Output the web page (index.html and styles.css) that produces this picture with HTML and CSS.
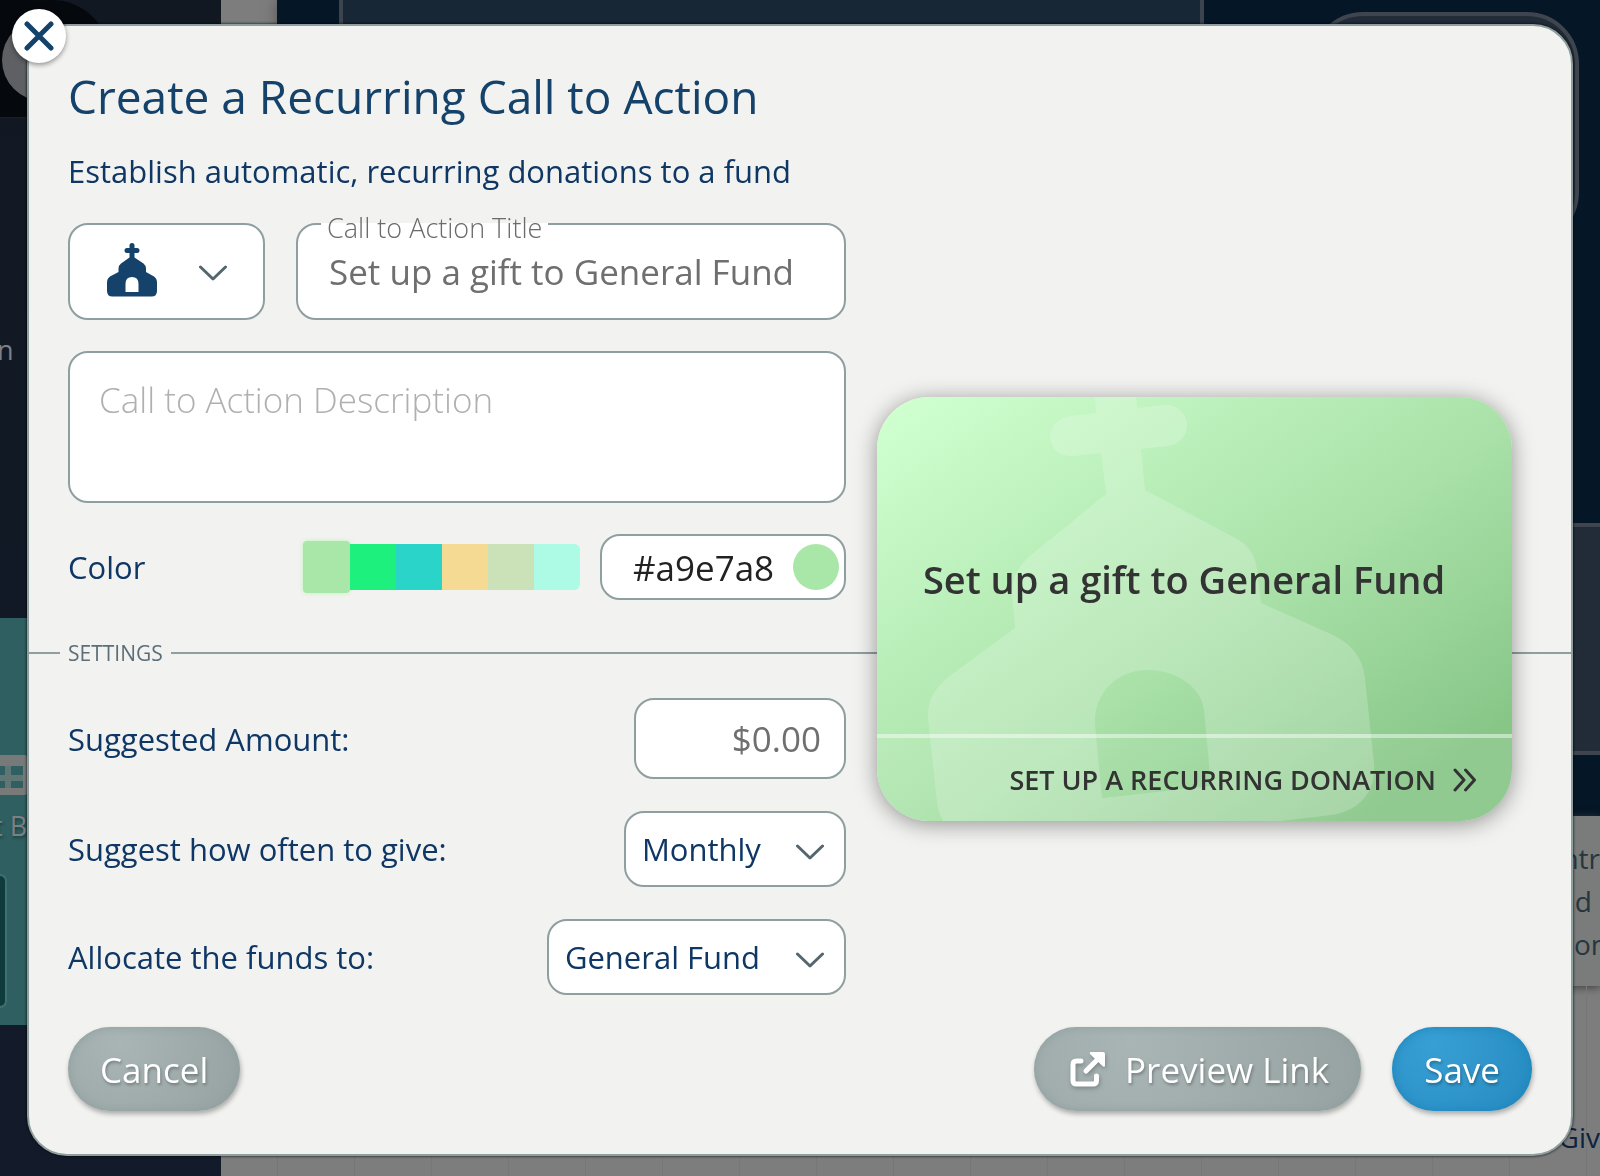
FILE: index.html
```html
<!DOCTYPE html>
<html lang="en">
<head>
    <meta charset="UTF-8">
    <meta name="viewport" content="width=device-width, initial-scale=1.0">
    <title>Create a Recurring Call to Action</title>
    <link rel="stylesheet" href="styles.css">
</head>
<body>
    <!-- Dimmed page behind the dialog -->
    <div class="page" aria-hidden="true">
        <div class="sidebar">
            <div class="profile"><div class="avatar"></div></div>
            <div class="org-name">n</div>
            <div class="nav-active">
                <svg class="nav-icon" viewBox="0 0 56 40">
                    <rect width="56" height="40" rx="4" fill="#777a79"/>
                    <path d="M6 11h45v22H6z" fill="#2f5f60"/>
                    <path d="M6 23h45M21 11v22M36 11v22" stroke="#5f7674" stroke-width="6"/>
                </svg>
                <div class="nav-label">t B</div>
                <div class="nav-box"></div>
            </div>
        </div>
        <div class="main">
            <div class="hero">
                <div class="hero-panel"></div>
                <div class="hero-side">
                    <div class="stat-box"></div>
                    <div class="stat-box wide"></div>
                </div>
            </div>
            <div class="note">
                <p>ntr</p>
                <p class="note-mid">nd</p>
                <p class="note-end">on</p>
            </div>
            <div class="chart">Giv</div>
        </div>
    </div>

    <div class="overlay">
        <form class="modal" role="dialog" aria-labelledby="modalTitle">
            <button type="button" class="close-button" aria-label="Close">
                <svg viewBox="0 0 30 30" width="30" height="30">
                    <path d="M3 3l24 24M27 3L3 27" stroke="#14426b" stroke-width="5" stroke-linecap="round"/>
                </svg>
            </button>

            <h1 id="modalTitle">Create a Recurring Call to Action</h1>
            <p class="subtitle">Establish automatic, recurring donations to a fund</p>

            <div class="modal-body">
                <!-- Appearance -->
                <div class="fields">
                    <div class="title-row">
                        <button type="button" class="icon-picker" aria-label="Choose icon">
                            <svg viewBox="0 0 50 58" width="50" height="58">
                                <path fill="#14426b" fill-rule="evenodd" d="M22.5 2.5a2.5 2.5 0 0 1 5 0V5H30a2.400 2.400 0 0 1 0 5h-2.500v4.500l9 6q2.500 2 2.500 5V29l8 4.500q3 2 3 6V48q0 5.500-5.500 5.500h-39Q0 53.500 0 48v-8.500q0-4 3-6l8.500-4.500v-3.500q0-3 2.500-5l8.500-6V10H20a2.400 2.400 0 0 1 0-5h2.500zM18.500 49h13v-8q0-7-6.500-7t-6.500 7z"/>
                            </svg>
                            <svg class="chevron" viewBox="0 -2 28 18" width="28" height="18"><path d="M1.500 2L14 14 26.500 2"/></svg>
                        </button>
                        <div class="title-field">
                            <label for="ctaTitle">Call to Action Title</label>
                            <input type="text" id="ctaTitle" placeholder="Set up a gift to General Fund">
                        </div>
                    </div>

                    <textarea class="description" aria-label="Call to Action Description" placeholder="Call to Action Description"></textarea>

                    <div class="row color-row">
                        <label for="colorHex">Color</label>
                        <div class="swatches">
                            <input type="radio" name="swatch" aria-label="#a9e7a8" style="background: #a9e7a8" checked>
                            <input type="radio" name="swatch" aria-label="#1ef07e" style="background: #1ef07e">
                            <input type="radio" name="swatch" aria-label="#2ad4c9" style="background: #2ad4c9">
                            <input type="radio" name="swatch" aria-label="#f4da92" style="background: #f4da92">
                            <input type="radio" name="swatch" aria-label="#cbe2b8" style="background: #cbe2b8">
                            <input type="radio" name="swatch" aria-label="#adfae5" style="background: #adfae5">
                        </div>
                        <div class="color-input">
                            <input type="text" id="colorHex" value="#a9e7a8">
                            <input type="color" class="color-dot" aria-label="Pick a color" value="#a9e7a8">
                        </div>
                    </div>
                </div>

                <h2 class="divider">SETTINGS</h2>

                <!-- Settings -->
                <div class="settings">
                    <div class="row">
                        <label for="amount">Suggested Amount:</label>
                        <input type="text" id="amount" class="amount" placeholder="$0.00">
                    </div>
                    <div class="row">
                        <label for="frequency">Suggest how often to give:</label>
                        <div class="select">
                            <select id="frequency">
                                <option>Monthly</option>
                            </select>
                            <svg class="chevron" viewBox="0 -2 28 18" width="28" height="18"><path d="M1.500 2L14 14 26.500 2"/></svg>
                        </div>
                    </div>
                    <div class="row">
                        <label for="fund">Allocate the funds to:</label>
                        <div class="select">
                            <select id="fund">
                                <option>General Fund</option>
                            </select>
                            <svg class="chevron" viewBox="0 -2 28 18" width="28" height="18"><path d="M1.500 2L14 14 26.500 2"/></svg>
                        </div>
                    </div>
                </div>

                <!-- Live card -->
                <div class="card">
                    <svg class="card-art" viewBox="0 0 635 424" preserveAspectRatio="xMidYMid slice">
                        <path fill="#fff" fill-opacity=".2" fill-rule="evenodd" d="M218 0L219 16L194 19C180 21 172 31 173 42C175 53 184 60 197 59L224 56L229 97L154 158C141 169 134 182 135 197L138 231L74 278C57 291 50 304 51 322L60 405Q61 415 66 424H404L454 418C482 414 499 395 497 367L488 282C486 262 476 248 456 238L384 206L380 172C378 158 371 148 360 142L268 93L264 52L291 49C303 47 311 38 310 26C308 14 299 7 287 8L260 11L259 0ZM225 401L218 328C216 297 240 273 270 273C300 273 324 290 327 313L334 389Z"/>
                    </svg>
                    <div class="card-title">Set up a gift to General Fund</div>
                    <div class="card-footer">
                        SET UP A RECURRING DONATION
                        <svg viewBox="0 0 24 24" width="24" height="24"><path d="M2 2l9 10-9 10M12.500 2l9 10-9 10" fill="none" stroke="#333" stroke-width="3" stroke-linecap="round" stroke-linejoin="round"/></svg>
                    </div>
                </div>
            </div>

            <div class="actions">
                <button type="button" class="button">Cancel</button>
                <button type="button" class="button preview-button">
                    <svg viewBox="0 0 36 36" width="36" height="36">
                        <path d="M11 10H6.500Q3 10 3 13.500V29.500Q3 33 6.500 33H23Q26.500 33 26.500 29.500V25" fill="none" stroke="#fff" stroke-width="5" stroke-linecap="round"/>
                        <path d="M16 20L28 8" stroke="#fff" stroke-width="5" stroke-linecap="round"/>
                        <path d="M21 1H33Q35 1 35 3V14.500Q35 16.500 33 15.500L20 3Q19 1 21 1z" fill="#fff"/>
                    </svg>
                    Preview Link
                </button>
                <button type="submit" class="button save-button">Save</button>
            </div>
        </form>
    </div>
</body>
</html>
```
FILE: styles.css
```css
* {
    margin: 0;
    padding: 0;
    box-sizing: border-box;
}

body {
    font-family: "Open Sans", sans-serif;
    font-size: 31px;
    color: #0f3765;
    background: #7d7d7d;
}

input,
textarea,
select,
button {
    font-family: inherit;
    color: inherit;
}

/* Page behind the dialog */
.page {
    position: fixed;
    inset: 0;
    display: grid;
    grid-template-columns: 221px 1fr;
    overflow: hidden;
    font-size: 27px;
    line-height: 43px;
}

.sidebar {
    background: linear-gradient(#111822, #131b2b);
    color: #7d7f83;
}

.profile {
    width: 110px;
    height: 118px;
    padding: 19px 2px;
    background: #05080d;
    border-radius: 0 58px 58px 0;
    border-bottom: 1px solid #1a1f27;
}

.avatar {
    width: 82px;
    height: 82px;
    border-radius: 50%;
    background: #5f6063;
}

.org-name {
    height: 500px;
    margin-left: -3px;
    padding-top: 210px;
}

.nav-active {
    height: 407px;
    padding-top: 137px;
    background: #2f5f60;
}

.nav-icon {
    display: block;
    width: 56px;
    height: 40px;
    margin-left: -28px;
}

.nav-label {
    margin: 9px 0 0 -7px;
    text-shadow: 1px 2px 3px #1d4040;
}

.nav-box {
    width: 7px;
    height: 134px;
    margin-top: 27px;
    background: #0f3b3c;
    border: 2px solid #3f7070;
    border-left: 0;
    border-radius: 0 20px 20px 0;
}

.main {
    min-width: 0;
    background: #7d7d7d;
}

.hero {
    display: flex;
    justify-content: space-between;
    height: 816px;
    margin-left: 56px;
    background: #051727;
    box-shadow: 0 0 12px #555;
}

.hero-panel {
    width: 865px;
    height: 600px;
    margin-left: 62px;
    background: #182735;
    border: 4px solid #3b444e;
    border-width: 0 4px;
    border-radius: 0 0 50px 50px;
}

.hero-side {
    width: 289px;
}

.stat-box {
    width: 268px;
    height: 232px;
    margin-top: 12px;
    background: #222c38;
    border: 4px solid #3e454e;
    border-radius: 52px;
}

.stat-box.wide {
    width: 100%;
    margin-top: 279px;
    border-width: 4px 0;
    border-radius: 0;
}

.note {
    height: 170px;
    padding-top: 21px;
    background: #7a7c7b;
    box-shadow: 0 2px 8px #444;
    color: #26363f;
    font-size: 28px;
    text-align: right;
}

.note-mid {
    padding-right: 8px;
}

.note-end {
    margin-right: -8px;
}

.chart {
    height: 300px;
    margin-left: 56px;
    padding-top: 131px;
    color: #0d2340;
    font-size: 28px;
    line-height: 40px;
    text-align: right;
    background: repeating-linear-gradient(to right, #777 0 1px, transparent 1px 77px);
}

/* Dialog */
.overlay {
    position: relative;
    min-height: 100vh;
    padding: 24px 27px 20px;
}

.modal {
    position: relative;
    padding: 40px 39px 43px;
    background: #f2f2f0;
    border: 2px solid #8f9e9f;
    border-radius: 40px;
    box-shadow: 0 0 3px #000;
}

.close-button {
    position: absolute;
    top: -17px;
    left: -17px;
    display: flex;
    align-items: center;
    justify-content: center;
    width: 54px;
    height: 54px;
    background: white;
    border: none;
    border-radius: 50%;
    box-shadow: 0 2px 5px rgba(0, 0, 0, 0.4);
    cursor: pointer;
}

h1 {
    margin-bottom: 25px;
    color: #14426b;
    font-size: 46px;
    font-weight: 400;
    line-height: 60px;
}

.subtitle {
    margin-bottom: 32px;
    line-height: 40px;
}

.modal-body {
    display: grid;
    grid-template-columns: 19fr 16fr;
    column-gap: 31px;
}

.fields {
    grid-area: 1 / 1;
    display: flex;
    flex-direction: column;
    gap: 31px;
}

.title-row {
    display: flex;
    gap: 31px;
    height: 97px;
}

.icon-picker,
.title-field input,
.description,
.color-input,
.amount,
select {
    background: white;
    border: 2px solid #8f9e9f;
    border-radius: 20px;
}

.icon-picker {
    display: flex;
    align-items: center;
    gap: 42px;
    width: 197px;
    padding-left: 37px;
    cursor: pointer;
}

.chevron path {
    fill: none;
    stroke: #54666f;
    stroke-width: 3;
    stroke-linecap: round;
    stroke-linejoin: round;
}

.title-field {
    position: relative;
    flex: 1;
}

.title-field label {
    position: absolute;
    top: -13px;
    left: 25px;
    padding: 0 6px;
    color: #6b6b6b;
    font-size: 27px;
    font-weight: 300;
    line-height: 36px;
    background: linear-gradient(transparent 13px, white 13px);
}

.title-field input {
    width: 100%;
    height: 97px;
    padding: 0 31px;
    font-size: 35px;
}

::placeholder {
    color: #6f6f6f;
    opacity: 1;
}

.description {
    display: block;
    width: 100%;
    height: 152px;
    padding: 24px 29px;
    font-size: 35px;
    font-weight: 300;
    line-height: 46px;
    resize: none;
}

.description::placeholder {
    color: #b0b0b0;
}

.row {
    display: flex;
    align-items: center;
    justify-content: space-between;
}

.color-row {
    gap: 20px;
}

.color-row label {
    flex: 1;
}

.swatches {
    display: flex;
    align-items: center;
}

.swatches input {
    appearance: none;
    width: 46px;
    height: 46px;
    cursor: pointer;
}

.swatches input:checked {
    width: 47px;
    height: 52px;
    border-radius: 4px;
    box-shadow: 0 0 4px #b9f7b8;
}

.swatches input:last-child {
    border-radius: 0 6px 6px 0;
}

.color-input {
    display: flex;
    align-items: center;
    width: 246px;
    height: 66px;
    padding: 0 5px 0 31px;
}

.color-input input[type="text"] {
    flex: 1;
    min-width: 0;
    color: #222;
    font-size: 35px;
    background: none;
    border: none;
}

.color-dot {
    appearance: none;
    width: 46px;
    height: 46px;
    background: none;
    border: none;
}

.color-dot::-webkit-color-swatch-wrapper {
    padding: 0;
}

.color-dot::-webkit-color-swatch {
    border: none;
    border-radius: 50%;
}

.divider {
    grid-area: 2 / 1 / 3 / 3;
    display: flex;
    align-items: center;
    gap: 8px;
    margin: 38px -39px 30px;
    color: #5c6f78;
    font-size: 21px;
    font-weight: 400;
    line-height: 30px;
}

.divider::before,
.divider::after {
    content: "";
    width: 31px;
    height: 2px;
    background: #8f9e9f;
}

.divider::after {
    flex: 1;
}

.settings {
    grid-area: 3 / 1;
    display: flex;
    flex-direction: column;
    gap: 32px;
}

.amount {
    width: 212px;
    height: 81px;
    padding: 0 23px;
    font-size: 35px;
    text-align: right;
}

.select {
    position: relative;
}

.select .chevron {
    position: absolute;
    top: 31px;
    right: 22px;
    pointer-events: none;
}

select {
    display: block;
    appearance: none;
    height: 76px;
    padding: 0 83px 0 16px;
    font-size: 31px;
}

/* Card */
.card {
    grid-area: 1 / 2 / 4 / 3;
    align-self: center;
    position: relative;
    display: flex;
    flex-direction: column;
    height: 424px;
    margin-right: 20px;
    overflow: hidden;
    color: #333;
    background: linear-gradient(145deg, #cfffcf 3%, #a9e1a8 54%, #88c688 88%, #88c688);
    border-radius: 52px;
    box-shadow: 0 3px 22px rgba(0, 0, 0, 0.4);
}

.card-art {
    position: absolute;
    inset: 0;
    width: 100%;
    height: 100%;
}

.card-title {
    position: relative;
    flex: 1;
    padding: 156px 46px 0;
    font-size: 38px;
    font-weight: 600;
    line-height: 52px;
}

.card-footer {
    position: relative;
    display: flex;
    align-items: center;
    justify-content: flex-end;
    gap: 17px;
    height: 87px;
    padding-right: 35px;
    font-size: 27px;
    font-weight: 600;
    background: rgba(255, 255, 255, 0.08);
    border-top: 4px solid rgba(255, 255, 255, 0.45);
}

/* Buttons */
.actions {
    display: flex;
    gap: 31px;
    margin-top: 32px;
}

.button {
    display: flex;
    align-items: center;
    gap: 19px;
    height: 84px;
    padding: 0 32px;
    color: white;
    font-size: 35px;
    text-shadow: 1px 2px 3px rgba(0, 0, 0, 0.3);
    background: radial-gradient(circle at 30% 20%, #a9b5b5, #96a2a2);
    border: none;
    border-radius: 42px;
    box-shadow: 1px 3px 5px rgba(0, 0, 0, 0.3), inset 0 0 10px #8f9e9e;
    cursor: pointer;
}

.preview-button {
    margin-left: auto;
    padding-left: 36px;
}

.preview-button svg {
    filter: drop-shadow(1px 2px 2px rgba(0, 0, 0, 0.25));
}

.save-button {
    background: radial-gradient(circle at 30% 20%, #389fd4, #258abf);
    box-shadow: 1px 3px 5px rgba(0, 0, 0, 0.3), inset 0 0 10px #1e86bd;
}
```
